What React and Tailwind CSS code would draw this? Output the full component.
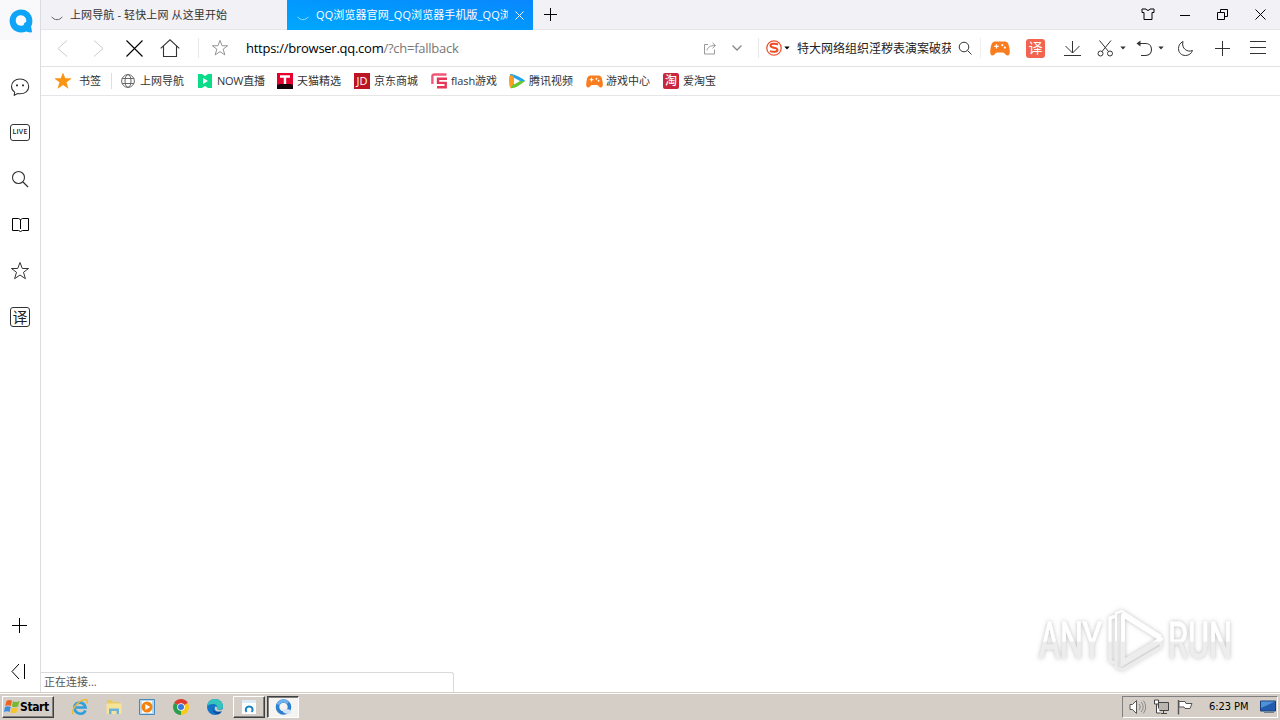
import clsx from "clsx";

const UI_FONT = "font-['Open_Sans','Noto_Sans_CJK_SC',sans-serif]";
const SYS_FONT = "font-['DejaVu_Sans_Condensed','DejaVu_Sans',sans-serif]";

function Svg({ w = 20, h = 20, children, className }) {
  return (
    <svg
      width={w}
      height={h}
      viewBox={`0 0 ${w} ${h}`}
      fill="none"
      stroke="currentColor"
      strokeWidth="1"
      className={clsx("shrink-0", className)}
    >
      {children}
    </svg>
  );
}

function Cell({ className, children }) {
  return (
    <div className={clsx("flex shrink-0 items-center justify-center", className)}>
      {children}
    </div>
  );
}

const STAR = "M10 1.5l2.3 6h6.2l-5 3.8 1.9 6.4L10 14l-5.4 3.7 1.9-6.4-5-3.8h6.2z";

function Plus({ size = 15 }) {
  const m = size / 2;
  return (
    <Svg w={size} h={size}>
      <path d={`M${m} 0V${size}M0 ${m}H${size}`} />
    </Svg>
  );
}

function Caret() {
  return (
    <Svg w={6} h={4}>
      <path d="M0.3 0.5h5.4L3 3.6z" fill="currentColor" stroke="none" />
    </Svg>
  );
}

function Spinner() {
  return (
    <Svg w={12} h={5} className="mt-[7px] -ml-px">
      <path d="M0.8 0.8C3 4.6 9 4.6 11.200 0.8" />
    </Svg>
  );
}

function Gamepad({ w = 20, h = 15 }) {
  return (
    <svg width={w} height={h} viewBox="0 0 20 15" className="shrink-0">
      <path
        d="M5.500.5h9c3 0 4 2 4.800 6 .9 4.500.7 8-1.800 8-2.300 0-2.500-3-4.500-3H7c-2 0-2.200 3-4.500 3-2.500 0-2.700-3.500-1.800-8C1.500 2.500 2.500.5 5.500.5z"
        fill="#f97c1e"
      />
      <path d="M6.500 3.200v4.400M4.300 5.400h4.400" stroke="#fff" strokeWidth="1.300" />
      <circle cx="12.300" cy="4.200" r="1.100" fill="#fff" />
      <circle cx="14.800" cy="6.600" r="1.100" fill="#fff" />
    </svg>
  );
}

function Sidebar() {
  return (
    <aside className="flex w-[41px] shrink-0 flex-col border-r border-[#dcdcde] bg-white text-[#333]">
      <Cell className="h-10 bg-[#f9f9fb] pt-px pl-px">
        <svg width="24" height="24" viewBox="0 0 24 24">
          <path
            fillRule="evenodd"
            fill="#0ea5f8"
            d="M12 .5C18.500.5 23.400 5.400 23.400 12c0 2.300-.5 4-1.300 5.500.2 1.800.7 3 1 5.800-2.500.4-4.600 0-5.900-.7-1.500.6-3.200.9-5.200.9C5.500 23.500.6 18.500.6 12S5.500.5 12 .5zM11.800 6.300C8.800 6.300 6.800 8.500 6.800 11.500c0 3.200 2.200 5.200 5.200 5.200 1 0 2-.3 2.800-.8-.1-1.600.5-2.300 2.400-3 .7-3.600-1.800-6.600-5.400-6.600z"
          />
        </svg>
      </Cell>
      <div className="h-6" />
      <Cell className="h-[46px]">
        <Svg>
          <path
            d="M4.300 18.300l.3-3.200C2.500 13.700 1.500 11.700 1.500 9.500 1.500 5 5 2 10 2s8.700 3 8.700 7.500S15 16.800 10 16.800c-.9 0-1.800-.1-2.500-.3z"
            strokeWidth="1.100"
          />
          <path d="M6 7.500h2v1.800H6zM12 7.500h2v1.800h-2z" fill="currentColor" stroke="none" />
        </Svg>
      </Cell>
      <Cell className="h-[46px]">
        <div className="mb-px flex h-[17px] w-5 items-center justify-center rounded-[3px] border border-[#333] font-['Open_Sans',sans-serif] text-[7px] font-semibold tracking-[0.2px] text-[#222]">
          LIVE
        </div>
      </Cell>
      <Cell className="h-[46px]">
        <Svg>
          <circle cx="8.500" cy="8.500" r="6" strokeWidth="1.100" />
          <path d="M13 13l5 5" strokeWidth="1.300" />
        </Svg>
      </Cell>
      <Cell className="h-[46px] text-black">
        <Svg>
          <path d="M2.500 3.500h6l2 1.200 2-1.200h6v12h-6l-2 1-2-1h-6zM10.500 4.500v9.500" />
        </Svg>
      </Cell>
      <Cell className="h-[46px]">
        <Svg>
          <path d={STAR} />
        </Svg>
      </Cell>
      <Cell className="h-[46px]">
        <div className="flex size-5 items-center justify-center rounded-[3px] border border-[#333] pb-[2px] font-['Noto_Sans_CJK_SC',sans-serif] text-[15px] leading-none text-[#222]">
          译
        </div>
      </Cell>
      <div className="grow" />
      <Cell className="h-[46px] pr-[2px] text-black">
        <Plus />
      </Cell>
      <Cell className="h-11 pt-[2px] pr-[2px] text-black">
        <Svg w={16} h={16}>
          <path d="M8 1L1 8.500 8 16M13.500 1v15" />
        </Svg>
      </Cell>
    </aside>
  );
}

function TabBar() {
  return (
    <div className="flex h-[30px] shrink-0 border-b border-[#e6e6ea] bg-[#f1f1f6] text-[11px] leading-[30px] text-[#333]">
      <div className="flex w-[246px] shrink-0 items-center pl-[11px]">
        <span className="text-[#666]">
          <Spinner />
        </span>
        <span className="ml-[7px] w-[160px] overflow-hidden whitespace-nowrap tracking-[0.12px]">
          上网导航 - 轻快上网 从这里开始
        </span>
      </div>
      <div className="flex h-[30px] w-[246px] shrink-0 items-center bg-gradient-to-tr from-[#00a8fd] to-[#0a87fd] pl-[11px] text-white">
        <span className="text-[#8edcff]">
          <Spinner />
        </span>
        <span className="ml-[7px] w-[192px] overflow-hidden whitespace-nowrap tracking-[0.1px]">
          QQ浏览器官网_QQ浏览器手机版_QQ浏览器
        </span>
        <Svg w={9} h={9} className="ml-[7px]">
          <path d="M0.500 0.500l8 8M8.500 0.500l-8 8" />
        </Svg>
      </div>
      <Cell className="w-[35px] text-black">
        <Plus size={13} />
      </Cell>
      <div className="grow" />
      <Cell className="w-[38px] pl-px text-black">
        <Svg w={14} h={13}>
          <path d="M1 1.500h4c.5 1.800 3.500 1.800 4 0h4v3.500h-2v7H3V5H1z" transform="translate(0 -.5)" />
        </Svg>
      </Cell>
      <Cell className="w-[38px] text-black">
        <Svg w={10} h={2}>
          <path d="M0 1.500h10" />
        </Svg>
      </Cell>
      <Cell className="w-[38px] pr-px text-black">
        <Svg w={11} h={11}>
          <path d="M0.500 3.500h7v7h-7zM3.500 3V0.500h7v7H8" />
        </Svg>
      </Cell>
      <Cell className="w-[38px] pr-px text-black">
        <Svg w={11} h={11}>
          <path d="M0.500 0.500l10 10M10.500 0.500l-10 10" />
        </Svg>
      </Cell>
    </div>
  );
}

function Toolbar() {
  return (
    <div className="flex h-[37px] shrink-0 items-center border-b border-[#e2e2e4] pl-[3px] text-[#333]">
      <Cell className="w-9 text-[#ccc]">
        <Svg w={11} h={17}>
          <path d="M10 .5l-9 8 9 8" />
        </Svg>
      </Cell>
      <Cell className="w-9 text-[#ccc]">
        <Svg w={11} h={17}>
          <path d="M1 .5l9 8-9 8" />
        </Svg>
      </Cell>
      <Cell className="w-9 text-black">
        <Svg w={17} h={17}>
          <path d="M.5.5l16 16M16.500.5l-16 16" strokeWidth="1.100" />
        </Svg>
      </Cell>
      <Cell className="w-9">
        <Svg w={20} h={18}>
          <path d="M.7 9.300L10 .8l9.300 8.500M3.500 7v10.500h13V7" strokeWidth="1.100" />
        </Svg>
      </Cell>
      <div className="ml-[10px] h-5 w-px bg-[#e9e9ec]" />
      <Cell className="w-[42px] text-[#888]">
        <Svg w={18} h={18}>
          <path d={STAR} transform="scale(.9)" />
        </Svg>
      </Cell>
      <div className="ml-[5px] w-[450px] pt-px text-[13px] tracking-[-0.26px] whitespace-nowrap text-black">
        https://browser.qq.com<span className="text-[#777]">/?ch=fallback</span>
      </div>
      <Cell className="w-[27px] text-[#999]">
        <Svg w={14} h={13}>
          <path d="M5 2.500H1.500v9.500h10V7.500M4 8.500c.5-3 3-5 8-5M9.500.8l3 2.700-3 2.800" />
        </Svg>
      </Cell>
      <Cell className="w-[27px] text-[#888]">
        <Svg w={10} h={6}>
          <path d="M.5.5L5 5 9.500.5" strokeWidth="1.300" />
        </Svg>
      </Cell>
      <div className="ml-2 h-5 w-px bg-[#e6e9f0]" />
      <svg width="16" height="16" viewBox="0 0 16 16" className="ml-[7px] shrink-0" fill="none">
        <circle cx="8" cy="8" r="7.200" stroke="#ee5533" strokeWidth="1.300" />
        <path
          d="M12 4.500C10 3.600 4.500 3.300 4.500 5.700c0 2.500 7 1.600 7 4.200 0 2.300-5 2.200-7.500 1.200"
          stroke="#ee4a28"
          strokeWidth="2"
        />
      </svg>
      <div className="ml-[2px] text-black">
        <Caret />
      </div>
      <div className="ml-[7px] w-[154px] overflow-hidden pt-px text-[12px] whitespace-nowrap text-[#222]">
        特大网络组织淫秽表演案破获
      </div>
      <Svg w={14} h={14} className="ml-[7px]">
        <circle cx="6" cy="6" r="4.800" />
        <path d="M9.500 9.500l4 4" />
      </Svg>
      <div className="ml-2 h-5 w-px bg-[#eeeef1]" />
      <Cell className="w-[37px]">
        <Gamepad />
      </Cell>
      <Cell className="w-[35px]">
        <div className="flex size-[19px] items-center justify-center rounded-[3px] bg-[#f26350] pb-[2px] font-['Noto_Sans_CJK_SC',sans-serif] text-[14px] leading-none text-white">
          译
        </div>
      </Cell>
      <Cell className="w-[39px]">
        <Svg w={17} h={17}>
          <path d="M8.500 1v12M1.500 6l7 7 7-7M0 15.500h17" />
        </Svg>
      </Cell>
      <Cell className="w-[27px]">
        <Svg w={17} h={17}>
          <circle cx="3.500" cy="13.500" r="2.500" />
          <circle cx="13" cy="13.500" r="2.500" />
          <path d="M2.500.5l9 11M14 .5l-9 11" />
        </Svg>
      </Cell>
      <Cell className="w-[7px]">
        <Caret />
      </Cell>
      <Cell className="ml-[6px] w-[25px]">
        <Svg w={17} h={17}>
          <path d="M1 3.500h8.500c8 0 8 12 0 12H5" strokeWidth="1.100" />
          <path d="M4.500.5v6L.5 3.500z" fill="currentColor" stroke="none" />
        </Svg>
      </Cell>
      <Cell className="w-2">
        <Caret />
      </Cell>
      <Cell className="w-[41px]">
        <Svg w={17} h={17}>
          <path d="M6 1.500C3 3 1.500 5.500 1.500 8.500c0 4.300 3 7 7 7 3.300 0 6-2 7-5-5 2.200-11.500-2-9.500-9z" />
        </Svg>
      </Cell>
      <Cell className="w-[33px]">
        <Plus />
      </Cell>
      <Cell className="w-[38px]">
        <Svg w={16} h={14}>
          <path d="M0 .5h16M0 6.500h16M0 12.500h16" />
        </Svg>
      </Cell>
    </div>
  );
}

function Bookmark({ label, width = "w-[77px]", children }) {
  return (
    <div className={clsx("flex shrink-0 items-center", width)}>
      <Cell className="size-4">{children}</Cell>
      <span className="ml-1 whitespace-nowrap">{label}</span>
    </div>
  );
}

function BookmarkBar() {
  return (
    <div className="flex h-[29px] shrink-0 items-center border-b border-[#e6e6e8] pl-[14px] text-[11px] text-[#333]">
      <svg width="16" height="16" viewBox="0 0 20 20">
        <path d={STAR} fill="#fb9413" stroke="#fb9413" strokeWidth="1.600" />
      </svg>
      <span className="ml-2 w-8">书签</span>
      <div className="mr-2 h-4 w-px bg-[#dedee0]" />
      <Bookmark label="上网导航">
        <Svg w={14} h={14} className="text-[#666]">
          <circle cx="7" cy="7" r="6.400" />
          <ellipse cx="7" cy="7" rx="3" ry="6.400" />
          <path d="M1.200 4.500h11.600M1.200 9.500h11.600" />
        </Svg>
      </Bookmark>
      <Bookmark
        label={<span className="tracking-[-0.25px]">NOW直播</span>}
        width="w-[80px]"
      >
        <svg width="14" height="14" viewBox="0 0 14 14">
          <path d="M0 0h4l3 2 3-2h4v14h-4l-3-2-3 2H0z" fill="#0cdc8a" />
          <path d="M5 4l5 3-5 3z" fill="#fff" />
        </svg>
      </Bookmark>
      <Bookmark label="天猫精选">
        <svg width="16" height="16" viewBox="0 0 16 16">
          <path d="M0 0h16v16H0z" fill="#e5002d" />
          <path d="M0 12l3-1h10l3 1v4H0z" fill="#16040a" />
          <path d="M3 3.500h10M8 3.500V11" stroke="#fff" strokeWidth="2.400" />
        </svg>
      </Bookmark>
      <Bookmark label="京东商城">
        <div className="flex size-4 items-center justify-center bg-[#bd1424] pb-px font-['Open_Sans',sans-serif] text-[11px] leading-none text-white">
          JD
        </div>
      </Bookmark>
      <Bookmark
        label={<span className="tracking-[-0.1px]">flash游戏</span>}
        width="w-[78px]"
      >
        <svg width="16" height="16" viewBox="0 0 16 16" fill="none">
          <path d="M15.500 1.500H3.200C2 1.500 1.400 2 1.400 3v8" stroke="#f0587a" strokeWidth="2.400" />
          <path d="M16 5.700H7v4.200h7.700v4.300H6" stroke="#e73759" strokeWidth="2.400" />
        </svg>
      </Bookmark>
      <Bookmark label="腾讯视频">
        <svg width="16" height="16" viewBox="0 0 16 16">
          <path d="M1 1.500C2-.5 15 6 16 8L7 14 1 3z" fill="#20a4ee" />
          <path d="M1 2C-.5 4-.3 13 1.500 15L6 11 4.500 3z" fill="#ff9d22" />
          <path d="M1.500 15c2 1.500 10-3 14.500-7H9l-5 3.500z" fill="#66c82c" />
          <path d="M5 4.700L11 8l-6 3.500z" fill="#fff" />
        </svg>
      </Bookmark>
      <Bookmark label="游戏中心">
        <Gamepad w={17} h={13} />
      </Bookmark>
      <Bookmark label="爱淘宝">
        <div className="flex size-4 items-center justify-center rounded-[2px] bg-[#c8283c] pb-px text-[12px] leading-none font-medium text-white">
          淘
        </div>
      </Bookmark>
    </div>
  );
}

function Watermark() {
  const text = {
    fontSize: 50,
    fontFamily: "Roboto, sans-serif",
    fill: "url(#fade)",
    stroke: "url(#fade)",
    strokeWidth: 0.8,
    lengthAdjust: "spacingAndGlyphs",
  };
  return (
    <svg
      width="210"
      height="80"
      viewBox="0 0 210 80"
      className="absolute right-[40px] bottom-[11px]"
    >
      <defs>
        <linearGradient id="fade" gradientUnits="userSpaceOnUse" x1="0" y1="10" x2="0" y2="70">
          <stop offset="0.5" stopColor="#fff" />
          <stop offset="0.52" stopColor="#ededed" />
        </linearGradient>
        <filter id="glow" x="-10%" y="-20%" width="120%" height="140%">
          <feDropShadow dx="0" dy="0" stdDeviation="2" floodColor="#777" floodOpacity="0.5" />
        </filter>
      </defs>
      <g filter="url(#glow)">
        <text x="9" y="57" textLength="63" {...text}>
          ANY
        </text>
        <text x="138" y="57" textLength="64" {...text}>
          RUN
        </text>
        <g fill="none" strokeLinejoin="round">
          <path d="M86 15L80 17V60L86 63" stroke="url(#fade)" strokeWidth="3" />
          <path d="M86 40V66L92 69 131 46V41L92 64V40" stroke="#ececec" strokeWidth="2.500" />
          <path d="M93 14L131 38 93 61z" stroke="url(#fade)" strokeWidth="4" />
          <path d="M86 40V12L92 10 131 35" stroke="#fff" strokeWidth="2" />
        </g>
      </g>
    </svg>
  );
}

function StartButton() {
  return (
    <div className="flex h-[22px] w-[52px] shrink-0 items-center border border-t-white border-r-[#404040] border-b-[#404040] border-l-white pl-px text-[12px] font-bold tracking-[-0.4px] text-black shadow-[inset_-1px_-1px_0_#808080]">
      <svg width="16" height="15" viewBox="0 0 16 15" className="shrink-0">
        <path d="M2.500 2C4.500.7 6 .8 8 1.800L6.800 7C5 6 3 6 1.200 7z" fill="#ec6424" />
        <path d="M9 2.200c2 1 4 1 6.500-.2L14 7.500c-2 1-4 1-6.200 0z" fill="#79b833" />
        <path d="M1 8c2-1 4-1 5.700 0L5.500 13C4 12 2 12 0 13z" fill="#3d8fdd" />
        <path d="M7.500 8.500c2 1 4 1 6.200 0L12.500 13.500c-2 1-4 1-6 0z" fill="#f6c42c" />
      </svg>
      <span>Start</span>
    </div>
  );
}

function Taskbar() {
  return (
    <footer
      className={clsx(
        "flex h-7 shrink-0 items-center border-t border-[#d4cec6] bg-[#d5cec6] pl-[2px] text-[11px] text-black shadow-[inset_0_1px_0_#fff]",
        SYS_FONT
      )}
    >
      <StartButton />
      <Cell className="ml-[9px] w-[34px]">
        <svg width="18" height="18" viewBox="0 0 18 18" fill="none">
          <path d="M14.500 12.500C12 18 3.500 16 3.500 9.500S13 3 14.500 9.500H5" stroke="#319fdd" strokeWidth="2.700" />
          <path d="M2.500 16C-2 14 8 1.500 14.500 1.500c2 0 2.300 1.500 1.200 4" stroke="#efb931" strokeWidth="1.400" />
        </svg>
      </Cell>
      <Cell className="w-[33px]">
        <svg width="16" height="16" viewBox="0 0 16 16">
          <path d="M1 1h5l1 2h7v4H1z" fill="#e9c963" />
          <path d="M.5 4.500h15V15H.5z" fill="#f6e39a" />
          <path d="M3 15V9.500h10V15h-2.500v-3h-5v3z" fill="#6fb3dc" />
        </svg>
      </Cell>
      <Cell className="w-[34px]">
        <svg width="16" height="16" viewBox="0 0 16 16">
          <path d="M.5.5h15v15H.5z" fill="#b8d8ef" stroke="#4689bd" />
          <path d="M3 2h10v12H3z" fill="#fff" />
          <circle cx="8" cy="8" r="5.500" fill="#f28212" />
          <path d="M6.300 5l5 3-5 3z" fill="#fff" />
        </svg>
      </Cell>
      <Cell className="w-[34px]">
        <svg width="16" height="16" viewBox="0 0 16 16">
          <path d="M8 8L1.100 4A8 8 0 0 1 14.900 4z" fill="#df3b30" />
          <path d="M8 8l6.900-4A8 8 0 0 1 8 16z" fill="#fbc815" />
          <path d="M8 8v8A8 8 0 0 1 1.100 4z" fill="#2b9e4c" />
          <circle cx="8" cy="8" r="3.800" fill="#fff" />
          <circle cx="8" cy="8" r="3" fill="#3979df" />
        </svg>
      </Cell>
      <Cell className="w-[34px]">
        <svg width="16" height="16" viewBox="0 0 16 16">
          <circle cx="8" cy="8" r="8" fill="#1475c8" />
          <path d="M.3 7C1 2.500 4 0 8 0c5 0 8 3.500 8 7 0 3-2.500 4-4.500 4-2 0-2.500-1-1.500-2 1-2-1-4-4-4-2.500 0-4.500.8-5.700 2z" fill="#35c3bd" />
          <path d="M6 8c-1 3 2 6 7.500 4.500l1.300-.3c-.8 1.500-2 2.500-3.300 3C7 15 4.500 11 6 8z" fill="#0b4e9b" />
          <path d="M8 8c2-1.500 2 1 2 2 1 1.600 4 1.500 6 0v2l-3 .5c-4 .5-6-2-5-4.500z" fill="#d5cec6" />
        </svg>
      </Cell>
      <Cell className="ml-px h-[22px] w-8 border border-t-white border-r-[#404040] border-b-[#404040] border-l-white shadow-[inset_-1px_-1px_0_#808080]">
        <svg width="16" height="16" viewBox="0 0 16 16" fill="none">
          <path d="M1 1h14v14H1z" fill="#fff" />
          <path d="M1 1h14v3H1z" fill="#dceaf5" />
          <path d="M5.500 13c-2-3 .2-5.500 2.700-5.500S13 10 10.700 13" stroke="#1783c6" strokeWidth="2" />
        </svg>
      </Cell>
      <Cell className="ml-[2px] h-[22px] w-8 border border-t-[#404040] border-r-white border-b-white border-l-[#404040] bg-[#f6f4f1] shadow-[inset_1px_1px_0_#808080]">
        <svg width="17" height="16" viewBox="0 0 17 16" fill="none">
          <circle cx="8.500" cy="8" r="6" stroke="#2d7fd0" strokeWidth="3.600" />
          <path d="M3 5.500A6 6 0 0 1 13 4" stroke="#71b4ec" strokeWidth="3" />
          <path d="M8 13c-1-2.500 1.500-4 3.500-2.500 2.500-1 5 1 4.500 3-.4 1.500-6 2-8-.5z" fill="#d3e6f7" />
        </svg>
      </Cell>
      <div className="grow" />
      <div className="mr-[2px] flex h-[22px] w-[156px] shrink-0 items-center border border-t-[#808080] border-r-white border-b-white border-l-[#808080] pl-[6px]">
        <Svg w={17} h={16} className="text-[#555]">
          <path d="M1 5.500h2.500l4-4v13l-4-4H1z" fill="#fff" />
          <path d="M10 5c1.500 1.500 1.500 4.500 0 6M12 3c2.800 2.500 2.800 7.500 0 10M14 1.500c3.500 3 3.500 10 0 13" stroke="#888" />
        </Svg>
        <Svg w={16} h={16} className="ml-[7px] text-[#444]">
          <path d="M5.500 3.500h10v8h-10zM8 14.500h6M10.500 12v2" fill="#b9b6b0" />
          <path d="M1.500 1v4h4V1zM3.500 5v9h4" fill="#fff" />
        </Svg>
        <Svg w={16} h={16} className="ml-2 text-[#555]">
          <path d="M1.500 1v14.500" strokeWidth="1.400" />
          <path d="M2 2.500h6l1 2h6l-2 5H8l-1-1.500H2z" fill="#fff" />
        </Svg>
        <span className="ml-4 w-[42px] pt-[2px] tracking-[-0.05px] whitespace-nowrap">6:23 PM</span>
        <svg width="16" height="14" viewBox="0 0 16 14" className="ml-[9px] shrink-0">
          <path d="M.5 1h15v10H.5z" fill="#245cad" stroke="#173e7a" />
          <path d="M1 1.500h14L1 8z" fill="#4e92da" />
          <path d="M4 12.500h10" stroke="#75808f" />
        </svg>
      </div>
    </footer>
  );
}

export default function App() {
  return (
    <div className={clsx("flex h-[720px] w-[1280px] flex-col overflow-hidden bg-white", UI_FONT)}>
      <div className="flex min-h-0 grow">
        <Sidebar />
        <div className="flex w-[1239px] flex-col">
          <TabBar />
          <Toolbar />
          <BookmarkBar />
          <main className="relative flex grow flex-col justify-end">
            <Watermark />
            <div className="flex h-5 w-[413px] items-center rounded-tr-[3px] border-t border-r border-[#d9d9d9] pl-[3px] text-[11px] text-[#555]">
              正在连接...
            </div>
          </main>
        </div>
      </div>
      <Taskbar />
    </div>
  );
}
